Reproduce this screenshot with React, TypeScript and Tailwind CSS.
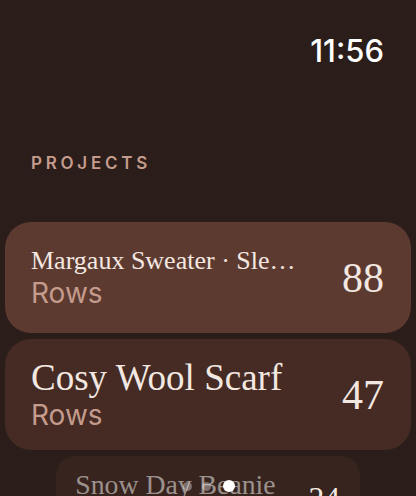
import React from 'react'

const serif = "font-['Liberation_Serif','DejaVu_Serif',serif]"
const sans = "font-['Inter','Roboto',sans-serif]"

type Project = { name: string; rows: number }

function ProjectCard({
  project,
  bg,
  titleSize,
  titleColor,
}: {
  project: Project
  bg: string
  titleSize: string
  titleColor: string
}) {
  return (
    <div className={`flex h-[111px] items-center justify-between rounded-[26px] pl-[26px] pr-[27px] ${bg}`}>
      <div className="flex min-w-0 flex-col">
        <p className={`${serif} ${titleSize} ${titleColor} whitespace-nowrap`}>{project.name}</p>
        <p className={`${sans} text-[28px] leading-[34px] text-[#c49b8c]`}>Rows</p>
      </div>
      <p className={`${serif} text-[42px] leading-none text-[#f3e8e1]`}>{project.rows}</p>
    </div>
  )
}

export default function App() {
  return (
    <div className="relative h-[496px] w-[416px] overflow-hidden bg-[#2a1d1a]">
      {/* status bar */}
      <div className="flex justify-end pr-[32px] pt-[33px]">
        <span className={`${sans} text-[31px] font-medium leading-[36px] text-white`}>11:56</span>
      </div>

      <p className={`${sans} mt-[84px] pl-[31px] text-[17px] font-semibold leading-[20px] tracking-[0.22em] text-[#c49b8c]`}>
        PROJECTS
      </p>

      <div className="mt-[49px] flex flex-col gap-[6px] px-[5px]">
        <ProjectCard
          project={{ name: 'Margaux Sweater · Sle…', rows: 88 }}
          bg="bg-[#5c3a30]"
          titleSize="text-[26px] leading-[30px]"
          titleColor="text-[#f3e8e1]"
        />
        <ProjectCard
          project={{ name: 'Cosy Wool Scarf', rows: 47 }}
          bg="bg-[#452b24]"
          titleSize="text-[37px] leading-[40px]"
          titleColor="text-[#f3e8e1]"
        />
        <div className="origin-top scale-75">
          <ProjectCard
            project={{ name: 'Snow Day Beanie', rows: 24 }}
            bg="bg-[#38241f]"
            titleSize="text-[37px] leading-[40px]"
            titleColor="text-[#9b928e]"
          />
        </div>
      </div>

      {/* page indicator */}
      <div className="absolute left-[183px] top-[480px] flex items-center">
        <span className="h-[9px] w-[9px] rounded-full bg-white/35" />
        <span className="ml-[10px] h-[9px] w-[9px] rounded-full bg-white/35" />
        <span className="ml-[12px] h-[12px] w-[12px] rounded-full bg-white" />
      </div>
    </div>
  )
}
